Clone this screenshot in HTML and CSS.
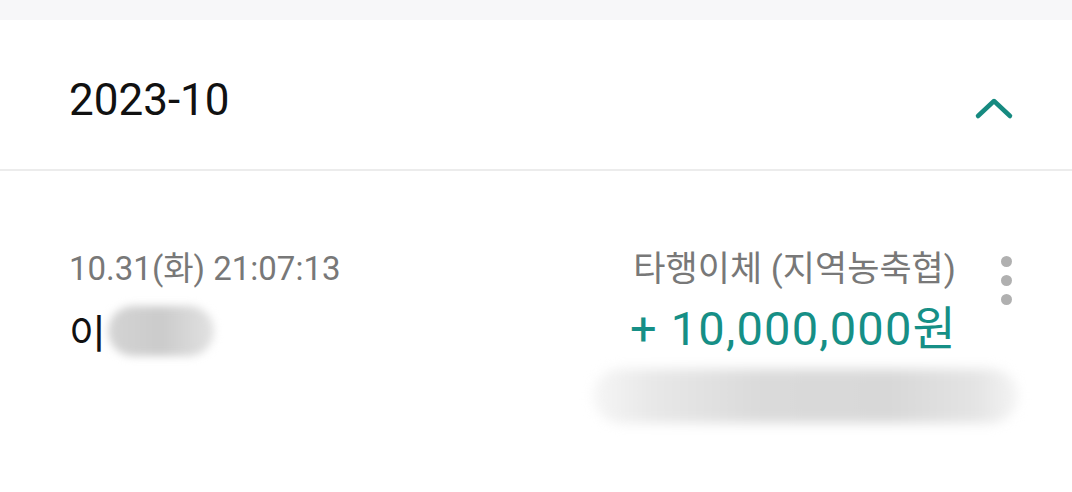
FILE: index.html
```html
<!DOCTYPE html>
<html lang="ko">
<head>
<meta charset="utf-8">
<link rel="stylesheet" href="styles.css">
</head>
<body>
<div class="topstrip"></div>
<div class="header">
  <div class="month">2023-10</div>
  <svg class="chev" width="40" height="24" viewBox="0 0 40 24"><path d="M4 19 L20 4 L36 19" fill="none" stroke="#168a80" stroke-width="4.5" stroke-linecap="round" stroke-linejoin="round"/></svg>
</div>
<div class="row">
  <div class="left">
    <div class="date">10.31(화) 21:07:13</div>
    <div class="name"><span>이</span><span class="blur-name"></span></div>
  </div>
  <div class="right">
    <div class="type">타행이체 (지역농축협)</div>
    <div class="amount">+ 10,000,000원</div>
    <div class="blur-memo"></div>
  </div>
  <div class="kebab"><i></i><i></i><i></i></div>
</div>
</body>
</html>
```
FILE: styles.css
```css
html, body { margin: 0; padding: 0; background: #fff; }
body { font-family: Roboto, "Noto Sans CJK KR", sans-serif; width: 1072px; height: 492px; overflow: hidden; }
.topstrip { height: 20px; background: #f7f7f9; }
.header {
  height: 149px;
  border-bottom: 2px solid #ececec;
  display: flex;
  align-items: flex-start;
  justify-content: space-between;
  padding: 0 58px 0 69px;
}
.month { font-size: 44px; color: #111; margin-top: 58px; line-height: 1; }
.chev { margin-top: 77px; }
.row { display: flex; padding: 0 0 0 69px; margin-top: 78px; }
.left { flex: 1; }
.date { font-size: 33px; color: #787878; line-height: 40px; font-weight: 400; }
.name { display: flex; align-items: center; margin-top: 16px; font-family: "Noto Sans CJK KR", sans-serif; font-size: 40px; color: #111; line-height: 52px; }
.blur-name { display: inline-block; width: 106px; height: 50px; margin-left: 2px; border-radius: 25px; background: linear-gradient(90deg, #d4d4d4 0%, #cbcbcb 50%, #e2e2e2 100%); filter: blur(4px); }
.right { display: flex; flex-direction: column; align-items: flex-end; }
.type { font-size: 35px; color: #787878; line-height: 42px; }
.amount { font-size: 47px; letter-spacing: 1.2px; margin-right: -1px; color: #168f86; line-height: 52px; margin-top: 12px; }
.blur-memo { width: 425px; height: 54px; margin-top: 14px; margin-right: -62px; border-radius: 27px; background: linear-gradient(90deg, #f6f6f6 0%, #e8e8e8 14%, #dadada 40%, #d8d8d8 70%, #e4e4e4 90%, #f4f4f4 100%); filter: blur(6px); }
.kebab { width: 32px; margin-left: 34px; margin-right: 50px; display: flex; flex-direction: column; align-items: center; gap: 8px; padding-top: 7px; }
.kebab i { width: 11px; height: 11px; border-radius: 50%; background: #b0b0b0; display: block; }
```
